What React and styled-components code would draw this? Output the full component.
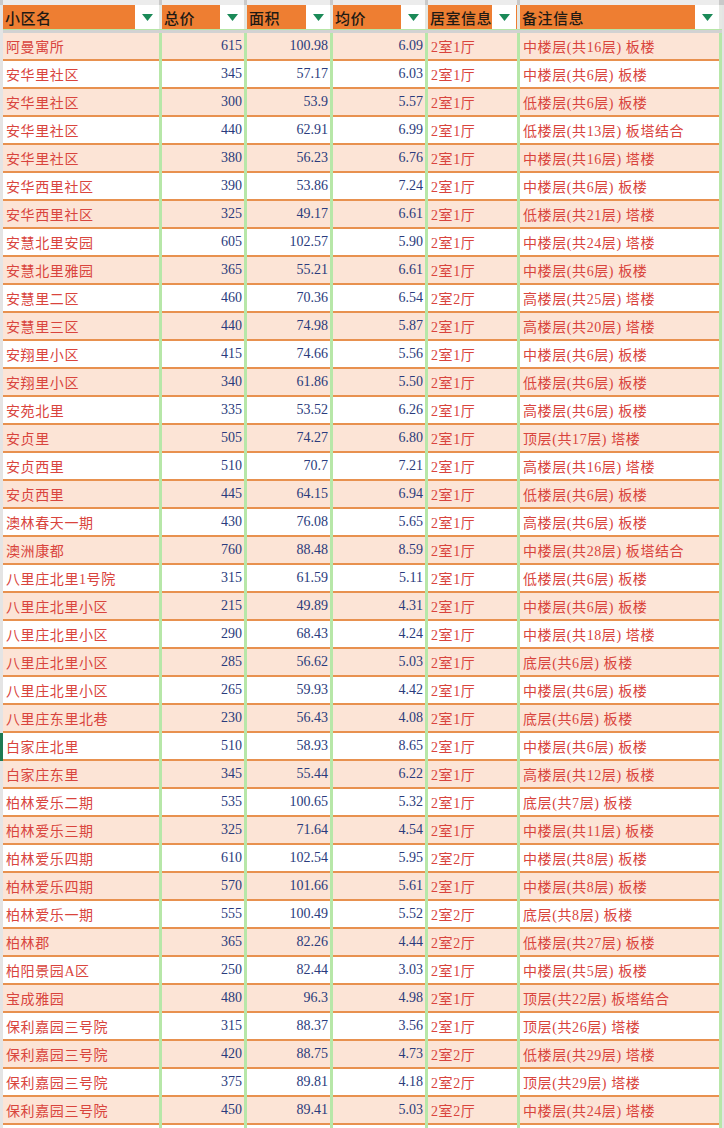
import React from 'react'
import styled, { createGlobalStyle } from 'styled-components'

const GlobalStyle = createGlobalStyle`
  html, body {
    margin: 0;
    padding: 0;
    background: #ffffff;
    overflow: hidden;
  }
  body {
    width: 724px;
    height: 1128px;
  }
`

const COLS = '156px 82px 83px 92px 89px 199px'

const rows = [
  ['阿曼寓所', '615', '100.98', '6.09', '2室1厅', '中楼层(共16层) 板楼'],
  ['安华里社区', '345', '57.17', '6.03', '2室1厅', '中楼层(共6层) 板楼'],
  ['安华里社区', '300', '53.9', '5.57', '2室1厅', '低楼层(共6层) 板楼'],
  ['安华里社区', '440', '62.91', '6.99', '2室1厅', '低楼层(共13层) 板塔结合'],
  ['安华里社区', '380', '56.23', '6.76', '2室1厅', '中楼层(共16层) 塔楼'],
  ['安华西里社区', '390', '53.86', '7.24', '2室1厅', '中楼层(共6层) 板楼'],
  ['安华西里社区', '325', '49.17', '6.61', '2室1厅', '低楼层(共21层) 塔楼'],
  ['安慧北里安园', '605', '102.57', '5.90', '2室1厅', '中楼层(共24层) 塔楼'],
  ['安慧北里雅园', '365', '55.21', '6.61', '2室1厅', '中楼层(共6层) 板楼'],
  ['安慧里二区', '460', '70.36', '6.54', '2室2厅', '高楼层(共25层) 塔楼'],
  ['安慧里三区', '440', '74.98', '5.87', '2室1厅', '高楼层(共20层) 塔楼'],
  ['安翔里小区', '415', '74.66', '5.56', '2室1厅', '中楼层(共6层) 板楼'],
  ['安翔里小区', '340', '61.86', '5.50', '2室1厅', '低楼层(共6层) 板楼'],
  ['安苑北里', '335', '53.52', '6.26', '2室1厅', '高楼层(共6层) 板楼'],
  ['安贞里', '505', '74.27', '6.80', '2室1厅', '顶层(共17层) 塔楼'],
  ['安贞西里', '510', '70.7', '7.21', '2室1厅', '高楼层(共16层) 塔楼'],
  ['安贞西里', '445', '64.15', '6.94', '2室1厅', '低楼层(共6层) 板楼'],
  ['澳林春天一期', '430', '76.08', '5.65', '2室1厅', '高楼层(共6层) 板楼'],
  ['澳洲康都', '760', '88.48', '8.59', '2室1厅', '中楼层(共28层) 板塔结合'],
  ['八里庄北里1号院', '315', '61.59', '5.11', '2室1厅', '低楼层(共6层) 板楼'],
  ['八里庄北里小区', '215', '49.89', '4.31', '2室1厅', '中楼层(共6层) 板楼'],
  ['八里庄北里小区', '290', '68.43', '4.24', '2室1厅', '中楼层(共18层) 塔楼'],
  ['八里庄北里小区', '285', '56.62', '5.03', '2室1厅', '底层(共6层) 板楼'],
  ['八里庄北里小区', '265', '59.93', '4.42', '2室1厅', '中楼层(共6层) 板楼'],
  ['八里庄东里北巷', '230', '56.43', '4.08', '2室1厅', '底层(共6层) 板楼'],
  ['白家庄北里', '510', '58.93', '8.65', '2室1厅', '中楼层(共6层) 板楼'],
  ['白家庄东里', '345', '55.44', '6.22', '2室1厅', '高楼层(共12层) 板楼'],
  ['柏林爱乐二期', '535', '100.65', '5.32', '2室1厅', '底层(共7层) 板楼'],
  ['柏林爱乐三期', '325', '71.64', '4.54', '2室1厅', '中楼层(共11层) 板楼'],
  ['柏林爱乐四期', '610', '102.54', '5.95', '2室2厅', '中楼层(共8层) 板楼'],
  ['柏林爱乐四期', '570', '101.66', '5.61', '2室1厅', '中楼层(共8层) 板楼'],
  ['柏林爱乐一期', '555', '100.49', '5.52', '2室2厅', '底层(共8层) 板楼'],
  ['柏林郡', '365', '82.26', '4.44', '2室2厅', '低楼层(共27层) 板楼'],
  ['柏阳景园A区', '250', '82.44', '3.03', '2室1厅', '中楼层(共5层) 板楼'],
  ['宝成雅园', '480', '96.3', '4.98', '2室1厅', '顶层(共22层) 板塔结合'],
  ['保利嘉园三号院', '315', '88.37', '3.56', '2室1厅', '顶层(共26层) 塔楼'],
  ['保利嘉园三号院', '420', '88.75', '4.73', '2室2厅', '低楼层(共29层) 塔楼'],
  ['保利嘉园三号院', '375', '89.81', '4.18', '2室2厅', '顶层(共29层) 塔楼'],
  ['保利嘉园三号院', '450', '89.41', '5.03', '2室2厅', '中楼层(共24层) 塔楼'],
]

const headers = ['小区名', '总价', '面积', '均价', '居室信息', '备注信息']

const Sheet = styled.div`
  width: 724px;
  height: 1128px;
  overflow: hidden;
  background: #e4e4e4;
  font-family: "Liberation Serif", "Noto Sans CJK SC", serif;
`

const ColumnStrip = styled.div`
  display: grid;
  grid-template-columns: ${COLS};
  column-gap: 3px;
  height: 5px;
  padding-left: 3px;
  background: #c9c9c9;
  & > div {
    background: #ececec;
  }
`

const Body = styled.div`
  display: flex;
  flex-direction: column;
  padding-left: 3px;
  padding-right: 2px;
  width: 719px;
  border-right: 2px solid #e8914f;
`

const HeaderRow = styled.div`
  display: grid;
  grid-template-columns: ${COLS};
  column-gap: 3px;
  background: #e5e8e3;
  border-bottom: 1px solid #b6e6a6;
`

const HeaderCell = styled.div`
  height: 24px;
  display: flex;
  align-items: stretch;
  background: #ee7e32;
  overflow: hidden;
`

const HeaderLabel = styled.span`
  flex: 1;
  min-width: 0;
  display: flex;
  align-items: center;
  padding-left: 2px;
  font-family: "Noto Sans CJK SC", sans-serif;
  font-size: 15px;
  font-weight: 500;
  letter-spacing: 0.5px;
  white-space: nowrap;
  color: #1f1a14;
`

const FilterButton = styled.span`
  flex: none;
  width: 24px;
  margin-right: ${p => (p.$inset ? '1px' : '0')};
  display: flex;
  align-items: center;
  justify-content: center;
  background: #ffffff;
`

const Freeze = styled.div`
  height: 3px;
  background: #d2d2d2;
`

const Row = styled.div`
  display: grid;
  grid-template-columns: ${COLS};
  column-gap: 3px;
  position: relative;
  background: #b7e7a8;
`

const Cell = styled.div`
  height: 26px;
  border-bottom: 2px solid #e8914f;
  background: ${p => (p.$odd ? '#fce4d6' : '#ffffff')};
  display: flex;
  align-items: center;
  justify-content: ${p => (p.$num ? 'flex-end' : 'flex-start')};
  padding: ${p => (p.$num ? '0 2px 0 0' : '0 0 0 3px')};
  font-size: 14px;
  letter-spacing: ${p => (p.$num ? '0' : '0.6px')};
  color: ${p => (p.$num ? '#2a3b7c' : '#d9443d')};
  white-space: nowrap;
  overflow: hidden;
`

const Selected = styled.span`
  position: absolute;
  left: -3px;
  top: 0;
  width: 3px;
  height: 28px;
  background: #1d7a52;
`

function Triangle() {
  return (
    <svg width="11" height="7" viewBox="0 0 11 7">
      <path d="M0 0 L11 0 L5.5 7 Z" fill="#1b8a58" />
    </svg>
  )
}

export default function App() {
  return (
    <>
      <GlobalStyle />
      <Sheet>
        <ColumnStrip>
          {headers.map(h => <div key={h} />)}
        </ColumnStrip>
        <Body>
          <HeaderRow>
            {headers.map((h, i) => (
              <HeaderCell key={h}>
                <HeaderLabel>{h}</HeaderLabel>
                <FilterButton $inset={i === 4}><Triangle /></FilterButton>
              </HeaderCell>
            ))}
          </HeaderRow>
          <Freeze />
          {rows.map((r, i) => {
            const odd = i % 2 === 0
            return (
              <Row key={i}>
                {i === 25 && <Selected />}
                <Cell $odd={odd}>{r[0]}</Cell>
                <Cell $odd={odd} $num>{r[1]}</Cell>
                <Cell $odd={odd} $num>{r[2]}</Cell>
                <Cell $odd={odd} $num>{r[3]}</Cell>
                <Cell $odd={odd}>{r[4]}</Cell>
                <Cell $odd={odd}>{r[5]}</Cell>
              </Row>
            )
          })}
          <Row>
            {headers.map(h => <Cell key={h} />)}
          </Row>
        </Body>
      </Sheet>
    </>
  )
}
